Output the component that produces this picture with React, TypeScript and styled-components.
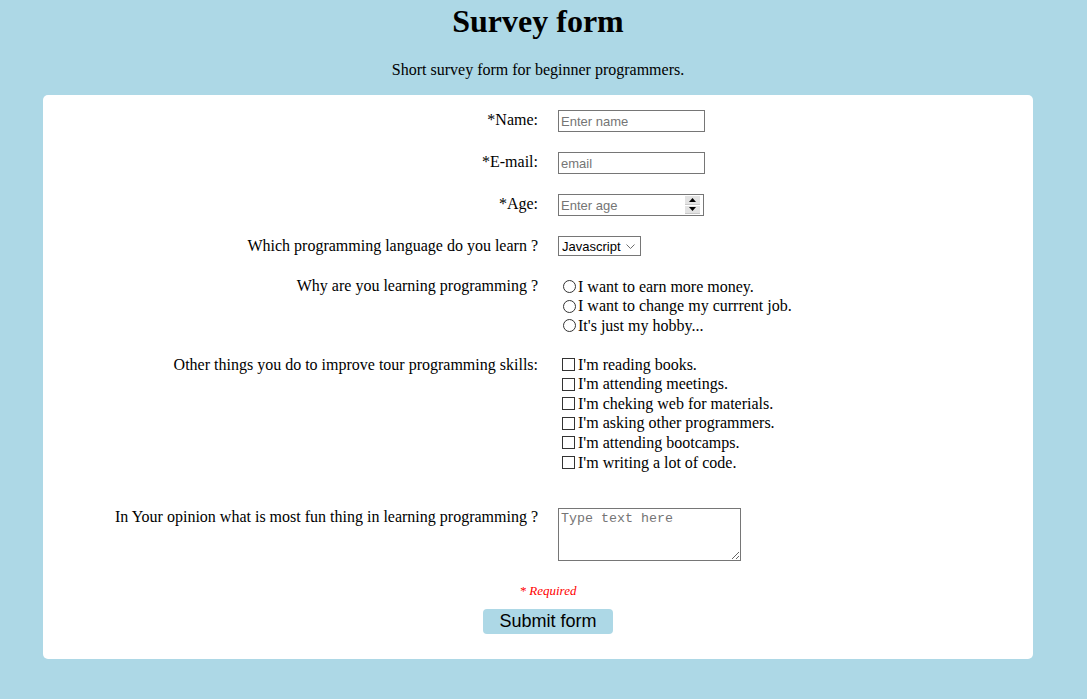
import styled, { createGlobalStyle } from 'styled-components';

const GlobalStyle = createGlobalStyle`
  html, body {
    margin: 0;
    background: #add8e6;
    font-family: "Liberation Serif", "Times New Roman", serif;
    font-size: 16px;
    color: #000;
  }
`;

const languages = ['Javascript', 'Python', 'Java', 'C#', 'C++', 'Other'];

const reasons = [
  'I want to earn more money.',
  'I want to change my currrent job.',
  "It's just my hobby...",
];

const habits = [
  "I'm reading books.",
  "I'm attending meetings.",
  "I'm cheking web for materials.",
  "I'm asking other programmers.",
  "I'm attending bootcamps.",
  "I'm writing a lot of code.",
];

export default function App() {
  return (
    <>
      <GlobalStyle />
      <Page>
        <Title>Survey form</Title>
        <Subtitle>Short survey form for beginner programmers.</Subtitle>
        <Card>
          <Row>
            <Label htmlFor="name">*Name:</Label>
            <Control>
              <TextInput id="name" type="text" placeholder="Enter name" />
            </Control>
          </Row>
          <Row>
            <Label htmlFor="email">*E-mail:</Label>
            <Control>
              <TextInput id="email" type="email" placeholder="email" />
            </Control>
          </Row>
          <Row>
            <Label htmlFor="age">*Age:</Label>
            <Control>
              <NumberWrap>
                <NumberInput id="age" type="number" placeholder="Enter age" />
                <Spinner>
                  <SpinButton>
                    <svg width="7" height="4" viewBox="0 0 7 4"><path d="M3.5 0 L7 4 L0 4 Z" fill="#000" /></svg>
                  </SpinButton>
                  <SpinButton>
                    <svg width="7" height="4" viewBox="0 0 7 4"><path d="M0 0 L7 0 L3.5 4 Z" fill="#000" /></svg>
                  </SpinButton>
                </Spinner>
              </NumberWrap>
            </Control>
          </Row>
          <Row>
            <Label htmlFor="language">Which programming language do you learn ?</Label>
            <Control>
              <SelectWrap>
                <Select id="language" defaultValue="Javascript">
                  {languages.map(l => <option key={l}>{l}</option>)}
                </Select>
                <Chevron width="9" height="5" viewBox="0 0 9 5">
                  <path d="M0.5 0.5 L4.5 4.5 L8.5 0.5" fill="none" stroke="#6d6d6d" strokeWidth="1" />
                </Chevron>
              </SelectWrap>
            </Control>
          </Row>
          <Row $spacing={19}>
            <Label as="div">Why are you learning programming ?</Label>
            <Control $shift={1}>
              {reasons.map(r => (
                <Option key={r}>
                  <Radio type="radio" name="reason" />
                  {r}
                </Option>
              ))}
            </Control>
          </Row>
          <Row $spacing={36}>
            <Label as="div">Other things you do to improve tour programming skills:</Label>
            <Control>
              {habits.map(h => (
                <Option key={h}>
                  <Checkbox type="checkbox" />
                  {h}
                </Option>
              ))}
            </Control>
          </Row>
          <Row $spacing={22}>
            <Label htmlFor="fun" $offset={0}>In Your opinion what is most fun thing in learning programming ?</Label>
            <Control>
              <TextArea id="fun" placeholder="Type text here" />
            </Control>
          </Row>
          <Footer>
            <Required>* Required</Required>
            <SubmitButton type="submit">Submit form</SubmitButton>
          </Footer>
        </Card>
      </Page>
    </>
  );
}

const Page = styled.div`
    width: 1076px;
    padding-bottom: 40px;
  `,
  Title = styled.h1`
    margin: 3px 0 0;
    font-size: 32px;
    line-height: 37px;
    font-weight: bold;
    text-align: center;
  `,
  Subtitle = styled.p`
    margin: 21px 0 0;
    line-height: 18px;
    text-align: center;
  `,
  Card = styled.form`
    width: 92%;
    margin: 16px auto 0;
    padding: 15px 0 25px;
    background: #fff;
    border-radius: 5px;
  `,
  Row = styled.div<{ $spacing?: number }>`
    display: grid;
    grid-template-columns: 1fr 1fr;
    align-items: start;
    margin-bottom: ${p => p.$spacing ?? 20}px;
  `,
  Label = styled.label<{ $offset?: number }>`
    display: block;
    text-align: right;
    line-height: 18px;
    padding-top: ${p => p.$offset ?? 1}px;
  `,
  Control = styled.div<{ $shift?: number }>`
    padding-left: 20px;
    padding-top: ${p => p.$shift ?? 0}px;
  `,
  fieldBase = `
    box-sizing: border-box;
    border: 1px solid #767676;
    border-radius: 0;
    background: #fff;
    color: #000;
    font-family: "Liberation Sans", Arial, sans-serif;
    font-size: 13px;
    outline: none;
    &::placeholder {
      color: #757575;
    }
  `,
  TextInput = styled.input`
    ${fieldBase}
    display: block;
    width: 147px;
    height: 22px;
    padding: 1px 2px;
  `,
  NumberWrap = styled.div`
    position: relative;
    width: 146px;
  `,
  NumberInput = styled.input`
    ${fieldBase}
    display: block;
    width: 146px;
    height: 22px;
    padding: 1px 22px 1px 2px;
    appearance: textfield;
    -moz-appearance: textfield;
    &::-webkit-inner-spin-button,
    &::-webkit-outer-spin-button {
      -webkit-appearance: none;
      margin: 0;
    }
  `,
  Spinner = styled.div`
    position: absolute;
    top: 2px;
    right: 4px;
    width: 15px;
    height: 18px;
    display: flex;
    flex-direction: column;
    gap: 1px;
    background: #fff;
  `,
  SpinButton = styled.div`
    flex: 1;
    display: flex;
    align-items: center;
    justify-content: center;
    background: #e3e3e3;
    border-bottom: 1px solid #c8c8c8;
  `,
  SelectWrap = styled.div`
    position: relative;
    width: 83px;
  `,
  Select = styled.select`
    ${fieldBase}
    display: block;
    width: 83px;
    height: 20px;
    padding: 0 0 0 3px;
    appearance: none;
    -webkit-appearance: none;
  `,
  Chevron = styled.svg`
    position: absolute;
    right: 6px;
    top: 8px;
    pointer-events: none;
  `,
  Option = styled.label`
    display: flex;
    align-items: center;
    height: 19.6px;
    line-height: 18px;
    white-space: nowrap;
  `,
  Radio = styled.input`
    appearance: none;
    -webkit-appearance: none;
    box-sizing: border-box;
    width: 13px;
    height: 13px;
    margin: 0 2px 0 5px;
    border: 1px solid #333;
    border-radius: 50%;
    background: #fff;
    flex: none;
    &:checked {
      background: radial-gradient(circle, #333 0 3px, #fff 3.5px);
    }
  `,
  Checkbox = styled.input`
    appearance: none;
    -webkit-appearance: none;
    box-sizing: border-box;
    width: 13px;
    height: 13px;
    margin: 0 3px 0 4px;
    border: 1px solid #333;
    border-radius: 0;
    background: #fff;
    flex: none;
    &:checked {
      background: #333;
    }
  `,
  TextArea = styled.textarea`
    box-sizing: border-box;
    display: block;
    width: 183px;
    height: 53px;
    margin: 0;
    padding: 2px;
    border: 1px solid #767676;
    font-family: "Liberation Mono", "Courier New", monospace;
    font-size: 13.33px;
    outline: none;
    &::placeholder {
      color: #757575;
    }
  `,
  Footer = styled.div`
    display: flex;
    flex-direction: column;
    align-items: center;
    padding-left: 20px;
  `,
  Required = styled.span`
    color: red;
    font-style: italic;
    font-size: 13px;
    line-height: 15px;
  `,
  SubmitButton = styled.button`
    margin-top: 11px;
    width: 130px;
    height: 25px;
    padding: 0;
    border: none;
    border-radius: 4px;
    background: #add8e6;
    color: #000;
    font-family: "Liberation Sans", Arial, sans-serif;
    font-size: 18px;
    line-height: 25px;
    cursor: pointer;
  `;
